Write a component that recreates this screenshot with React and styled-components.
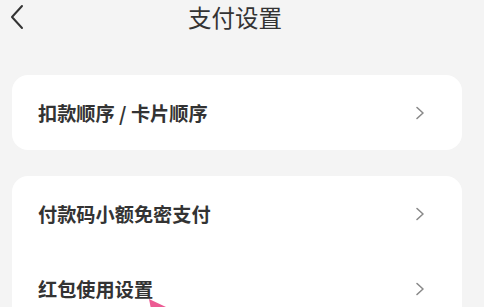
import React from "react";
import styled, { createGlobalStyle } from "styled-components";

const GlobalStyle = createGlobalStyle`
  html, body {
    margin: 0;
    padding: 0;
    background: #f4f4f4;
    overflow: hidden;
  }
  body {
    font-family: "Noto Sans CJK SC", "Noto Sans", sans-serif;
  }
`;

const Page = styled.div`
  position: relative;
  width: 484px;
  height: 307px;
  background: #f4f4f4;
  overflow: hidden;
`;

const NavBar = styled.div`
  position: relative;
  height: 36px;
  display: flex;
  align-items: center;
  justify-content: center;
  padding-right: 14px;
`;

const BackButton = styled.button`
  position: absolute;
  left: 5px;
  top: 3px;
  width: 22px;
  height: 28px;
  padding: 0;
  border: none;
  background: none;
  display: flex;
  align-items: center;
  justify-content: center;
`;

const Title = styled.h1`
  margin: 0;
  margin-top: -2px;
  font-size: 23.5px;
  font-weight: 400;
  color: #333;
`;

const Content = styled.div`
  display: flex;
  flex-direction: column;
  gap: 26px;
  padding: 39px 22px 0 12px;
`;

const Card = styled.div`
  background: #fff;
  border-radius: 16px;
  overflow: hidden;
`;

const Row = styled.div`
  height: 75px;
  display: flex;
  align-items: center;
  justify-content: space-between;
  padding: 0 37px 0 26px;
`;

const Label = styled.span`
  font-size: 19.2px;
  font-weight: 700;
  color: #333;
`;

const Pointer = styled.svg`
  position: absolute;
  left: 147px;
  top: 297px;
`;

const Chevron = () => (
  <svg width="10" height="14" viewBox="0 0 10 14">
    <path d="M2 1.5 L8 7 L2 12.5" fill="none" stroke="#8a8a8a" strokeWidth="1.6" strokeLinecap="round" strokeLinejoin="round" />
  </svg>
);

const items = [["扣款顺序 / 卡片顺序"], ["付款码小额免密支付", "红包使用设置"]];

export default function App() {
  return (
    <Page>
      <GlobalStyle />
      <NavBar>
        <BackButton>
          <svg width="16" height="26" viewBox="0 0 16 26">
            <path d="M14 2 L4 13 L14 24" fill="none" stroke="#333" strokeWidth="2" strokeLinecap="round" strokeLinejoin="round" />
          </svg>
        </BackButton>
        <Title>支付设置</Title>
      </NavBar>
      <Content>
        {items.map((group, i) => (
          <Card key={i}>
            {group.map((label) => (
              <Row key={label}>
                <Label>{label}</Label>
                <Chevron />
              </Row>
            ))}
          </Card>
        ))}
      </Content>
      <Pointer width="22" height="12" viewBox="0 0 22 12">
        <polygon points="2,2 19,10 22,12 4,12" fill="#ec5b93" />
      </Pointer>
    </Page>
  );
}
